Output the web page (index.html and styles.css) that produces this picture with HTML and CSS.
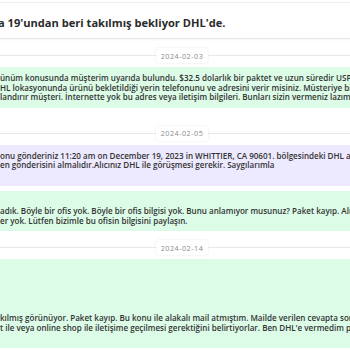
FILE: index.html
```html
<!DOCTYPE html>
<html lang="tr">
<head>
    <meta charset="UTF-8">
    <meta name="viewport" content="width=device-width, initial-scale=1.0">
    <title>Destek talebi</title>
    <link rel="stylesheet" href="styles.css">
</head>
<body>
    <div class="thread">
        <div class="subject">
            <h2>a 19'undan beri takılmış bekliyor DHL'de.</h2>
        </div>

        <div class="day"><span>2024-02-03</span></div>
        <div class="msg msg-customer msg-first">
            <p>ünüm konusunda müşterim uyarıda bulundu. $32.5 dolarlık bir paktet ve uzun süredir USPS'e teslim edilmedi.<br>HL lokasyonunda ürünü bekletildiği yerin telefonunu ve adresini verir misiniz. Müsteriye bilgisi verilsin.<br>landırır müşteri. İnternette yok bu adres veya iletişim bilgileri. Bunları sizin vermeniz lazım.</p>
        </div>

        <div class="day"><span>2024-02-05</span></div>
        <div class="msg msg-support">
            <p>onu gönderiniz 11:20 am on December 19, 2023 in WHITTIER, CA 90601. bölgesindeki DHL acceptance<br>en gönderisini almalıdır.Alıcınız DHL ile görüşmesi gerekir. Saygılarımla<br>&nbsp;</p>
        </div>
        <div class="msg msg-customer">
            <p>&nbsp;<br>adık. Böyle bir ofis yok. Böyle bir ofis bilgisi yok. Bunu anlamıyor musunuz? Paket kayıp. Alıcı bekliyor.<br>er yok. Lütfen bizimle bu ofisin bilgisini paylaşın.</p>
        </div>

        <div class="day"><span>2024-02-14</span></div>
        <div class="msg msg-customer">
            <p>&nbsp;<br>&nbsp;<br>&nbsp;<br>&nbsp;<br>&nbsp;<br>kılmış görünüyor. Paket kayıp. Bu konu ile alakalı mail atmıştım. Mailde verilen cevapta son durum<br>t ile veya online shop ile iletişime geçilmesi gerektiğini belirtiyorlar. Ben DHL'e vermedim paketi.<br>&nbsp;</p>
        </div>
    </div>
</body>
</html>
```

FILE: styles.css
```css
html, body {
    overflow: hidden;
}

body {
    font-family: "Open Sans", "Liberation Sans", sans-serif;
    margin: 0;
    padding: 0;
    background-color: #fff;
    color: #333;
}

.thread {
    width: 364px;
    padding-top: 2px;
}

.subject {
    background-color: #fff;
    border-top: 1px solid #efefef;
    border-bottom: 1px solid #e6e6e6;
    box-shadow: 0 1px 2px rgba(0, 0, 0, 0.04);
    height: 35px;
    display: flex;
    align-items: center;
}

.subject h2 {
    margin: 3px 0 0 -2px;
    font-size: 11.1px;
    font-weight: 700;
    color: #2b2b2b;
    white-space: nowrap;
}

/* date separator with a line on both sides */
.day {
    display: flex;
    align-items: center;
    margin: 9px 0 4px 0;
}

.day::before,
.day::after {
    content: "";
    flex: 1;
    height: 1px;
    background-color: #e8e8e8;
}

.day span {
    font-size: 7.2px;
    color: #8a8a8a;
    letter-spacing: 0.5px;
    background-color: #fff;
    padding: 2.5px 5px;
    border-radius: 3px;
    box-shadow: 0 0 2px rgba(0, 0, 0, 0.12);
}

.msg {
    padding: 6px 0;
    margin-bottom: 5px;
    overflow: hidden;
}

.msg-first {
    margin-bottom: 18px;
}

.msg p {
    margin: 0;
    font-size: 8.05px;
    font-weight: 600;
    line-height: 9.6px;
    white-space: nowrap;
}

.msg-customer {
    background-color: #dcfce7;
}

.msg-support {
    background-color: #ede9fe;
}
```
